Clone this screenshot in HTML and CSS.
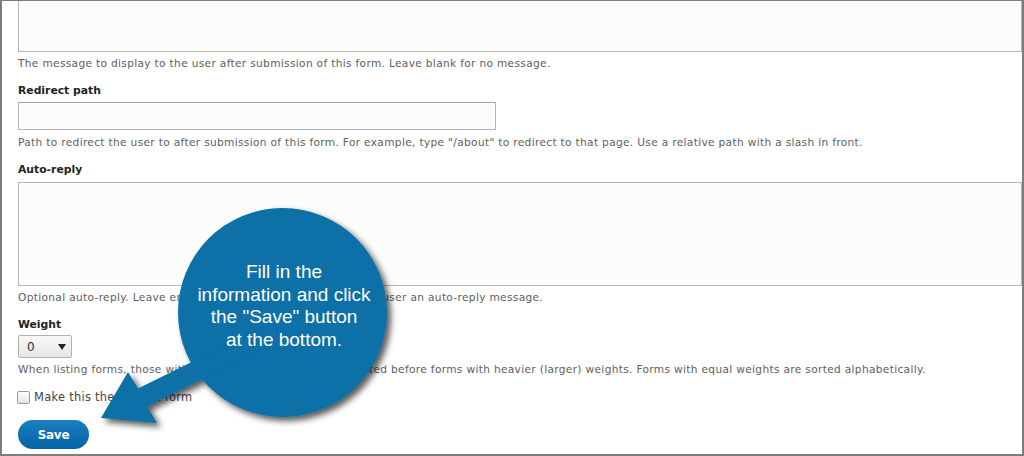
FILE: index.html
```html
<!DOCTYPE html>
<html lang="en">
<head>
    <meta charset="UTF-8">
    <title>Contact form settings</title>
    <link rel="stylesheet" href="styles.css">
</head>
<body>
    <div class="frame">
        <div class="form">
            <textarea class="area area-top"></textarea>
            <p class="help">The message to display to the user after submission of this form. Leave blank for no message.</p>

            <label class="label" for="redirect">Redirect path</label>
            <input class="text" type="text" id="redirect">
            <p class="help">Path to redirect the user to after submission of this form. For example, type "/about" to redirect to that page. Use a relative path with a slash in front.</p>

            <label class="label" for="reply">Auto-reply</label>
            <textarea class="area area-reply" id="reply"></textarea>
            <p class="help">Optional auto-reply. Leave empty if you do not want to send the user an auto-reply message.</p>

            <label class="label" for="weight">Weight</label>
            <div class="select" id="weight">
                <span>0</span>
                <span class="caret"></span>
            </div>
            <p class="help">When listing forms, those with lighter (smaller) weights get listed before forms with heavier (larger) weights. Forms with equal weights are sorted alphabetically.</p>

            <div class="check-row">
                <span class="checkbox"></span>
                <span>Make this the default form</span>
            </div>

            <button class="save">Save</button>
        </div>

        <!-- callout over the form -->
        <div class="callout">
            <svg width="1024" height="456" viewBox="0 0 1024 456">
                <defs>
                    <filter id="shadow" x="-20%" y="-20%" width="140%" height="140%">
                        <feDropShadow dx="4" dy="4" stdDeviation="3" flood-color="#000" flood-opacity="0.65"/>
                    </filter>
                </defs>
                <g filter="url(#shadow)" fill="#076fa7">
                    <circle cx="282.5" cy="312.5" r="104.5"/>
                    <polygon points="101,418 128,372 138,388.5 273,322 281,340 147,406.5 157,423"/>
                </g>
            </svg>
            <div class="callout-text">Fill in the<br>information and click<br>the "Save" button<br>at the bottom.</div>
        </div>
    </div>
</body>
</html>
```

FILE: styles.css
```css
body {
    margin: 0;
    background: #fff;
}
.frame {
    position: relative;
    width: 1024px;
    height: 456px;
    box-sizing: border-box;
    border: 2px solid #7d7d7d;
    border-top-width: 1px;
    overflow: hidden;
}
.form {
    display: flex;
    flex-direction: column;
    align-items: flex-start;
    padding-left: 16px;
    font-family: "DejaVu Sans", Verdana, sans-serif;
}
.area {
    display: block;
    box-sizing: border-box;
    width: 100%;
    margin: 0;
    background: #fcfcfa;
    border: 1px solid #b5b5b3;
    resize: none;
}
.area-top {
    height: 51px;
    border-top: none;
}
.area-reply {
    height: 104px;
    margin-top: 4px;
}
.help {
    margin: 4px 0 0;
    font-size: 10.6px;
    line-height: 14px;
    color: #5e5e5e;
    letter-spacing: 0.33px;
}
.label {
    margin-top: 13px;
    font-size: 10.8px;
    line-height: 16px;
    font-weight: bold;
    color: #222;
}
.text {
    box-sizing: border-box;
    width: 478px;
    height: 28px;
    margin: 3px 0 0;
    background: #fcfcfa;
    border: 1px solid #b5b5b3;
    border-top-color: #a0a09e;
}
.text + .help {
    margin-top: 5px;
}
.select {
    display: flex;
    align-items: center;
    justify-content: space-between;
    box-sizing: border-box;
    width: 54px;
    height: 23px;
    margin-top: 2px;
    padding: 0 5px 0 8px;
    background: linear-gradient(#f8f8f6, #e6e6e4);
    border: 1px solid #b0b0ae;
    border-radius: 2px;
    font-size: 12px;
    color: #333;
}
.caret {
    width: 0;
    height: 0;
    border-left: 4px solid transparent;
    border-right: 4px solid transparent;
    border-top: 6px solid #222;
}
.check-row {
    display: flex;
    align-items: center;
    gap: 4px;
    margin-top: 13px;
    margin-left: -1px;
    font-size: 11.4px;
    line-height: 16px;
    letter-spacing: 0.3px;
    color: #444;
}
.checkbox {
    width: 11px;
    height: 11px;
    border: 1px solid #9a9a9a;
    border-radius: 2px;
    background: linear-gradient(#fff, #e4e4e4);
}
.save {
    margin-top: 15px;
    width: 71px;
    height: 29px;
    border: none;
    border-radius: 15px;
    background: linear-gradient(#1b7fc2, #0263a6);
    color: #fff;
    font-family: "DejaVu Sans", Verdana, sans-serif;
    font-size: 12px;
    font-weight: bold;
    letter-spacing: -0.3px;
}
.callout {
    position: absolute;
    left: -2px;
    top: -1px;
    pointer-events: none;
}
.callout svg {
    display: block;
}
.callout-text {
    position: absolute;
    left: 172px;
    top: 261px;
    width: 224px;
    font-family: "Liberation Sans", Arial, sans-serif;
    font-size: 19px;
    line-height: 22.6px;
    color: #fff;
    text-align: center;
}
```
